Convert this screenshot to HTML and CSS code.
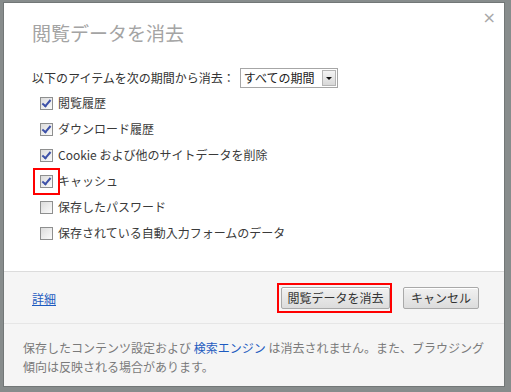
FILE: index.html
```html
<!DOCTYPE html>
<html lang="ja">

<head>
    <meta charset="UTF-8">
    <title>閲覧データを消去</title>
    <link rel="stylesheet" href="styles.css">
</head>

<body>
    <div class="dialog">
        <span class="close">×</span>
        <div class="dialog-main">
            <h1 class="title">閲覧データを消去</h1>
            <div class="period-row">
                <span>以下のアイテムを次の期間から消去：</span>
                <span class="select">
                    <span class="select-text">すべての期間</span>
                    <span class="select-arrow"></span>
                </span>
            </div>
            <ul class="checks">
                <li><span class="box checked"></span>閲覧履歴</li>
                <li><span class="box checked"></span>ダウンロード履歴</li>
                <li><span class="box checked"></span>Cookie および他のサイトデータを削除</li>
                <li><span class="box checked marked"></span>キャッシュ</li>
                <li><span class="box"></span>保存したパスワード</li>
                <li><span class="box"></span>保存されている自動入力フォームのデータ</li>
            </ul>
        </div>
        <div class="dialog-foot">
            <a class="link" href="#">詳細</a>
            <div class="buttons">
                <span class="marked-btn"><button class="btn btn-wide">閲覧データを消去</button></span>
                <button class="btn">キャンセル</button>
            </div>
        </div>
        <div class="dialog-note">
            <p>保存したコンテンツ設定および <a href="#">検索エンジン</a> は消去されません。また、ブラウジング</p>
            <p>傾向は反映される場合があります。</p>
        </div>
    </div>
</body>

</html>
```

FILE: styles.css
```css
/* Clear browsing data dialog over a dimmed page */

html,
body {
    margin: 0;
    padding: 0;
}

body {
    background-color: #878c8c;
    padding: 3px 0 0 4px;
    height: 392px;
    box-sizing: border-box;
    overflow: hidden;
    font-family: "Noto Sans CJK JP", sans-serif;
    font-size: 12px;
    color: #333;
}

.dialog {
    position: relative;
    width: 500px;
    height: 383px;
    background-color: #fff;
    display: flex;
    flex-direction: column;
    box-shadow: 0 0 0 1px rgba(0, 0, 0, 0.15);
}

.close {
    position: absolute;
    top: 6px;
    right: 8px;
    color: #a8a8a8;
    font-size: 16px;
    line-height: 18px;
    font-family: "DejaVu Sans", sans-serif;
}

.dialog-main {
    padding: 18px 28px 25px 28px;
}

.title {
    margin: 0;
    font-size: 19px;
    line-height: 24px;
    font-weight: normal;
    color: #a4a4a4;
}

.period-row {
    display: flex;
    align-items: center;
    margin-top: 23px;
    height: 20px;
    line-height: 20px;
}

.select {
    display: flex;
    align-items: center;
    width: 98px;
    height: 20px;
    box-sizing: border-box;
    border: 1px solid #a6a6a6;
    margin-left: 5px;
}

.select-text {
    flex: 1;
    padding-left: 3px;
    color: #222;
}

.select-arrow {
    width: 14px;
    height: 16px;
    margin-right: 1px;
    border: 1px solid #b5b5b5;
    box-sizing: border-box;
    background: linear-gradient(#f4f4f4, #d8d8d8);
    position: relative;
}

.select-arrow::after {
    content: "";
    position: absolute;
    left: 3px;
    top: 6px;
    border-left: 3px solid transparent;
    border-right: 3px solid transparent;
    border-top: 3px solid #111;
}

.checks {
    list-style: none;
    margin: 2px 0 0 0;
    padding: 0 0 0 8px;
}

.checks li {
    display: flex;
    align-items: center;
    height: 26px;
    line-height: 26px;
    color: #3a3a3a;
}

.box {
    width: 13px;
    height: 13px;
    box-sizing: border-box;
    border: 1px solid #8e8f8f;
    background: linear-gradient(135deg, #dcdcdc, #fbfbfb);
    margin-right: 5px;
    position: relative;
}

.box.checked::after {
    content: "";
    position: absolute;
    left: 3px;
    top: 0px;
    width: 3px;
    height: 7px;
    border-right: 2px solid #3d51a8;
    border-bottom: 2px solid #3d51a8;
    transform: rotate(40deg);
}

.box.marked {
    outline: 2px solid #f00;
    outline-offset: 5px;
}

.dialog-foot {
    display: flex;
    align-items: center;
    justify-content: space-between;
    height: 30px;
    padding: 11px 25px 10px 28px;
    background-color: #f5f5f5;
    border-top: 1px solid #dcdcdc;
}

.link {
    color: #1d5bc0;
    text-decoration: underline;
}

.buttons {
    display: flex;
    align-items: center;
}

.marked-btn {
    display: flex;
    border: 2px solid #f00;
    padding: 2px 0 2px 2px;
    margin-right: 11px;
}

.btn {
    height: 22px;
    padding: 0 7px;
    font-family: inherit;
    font-size: 12px;
    line-height: 20px;
    white-space: nowrap;
    color: #333;
    border: 1px solid #a9a9a9;
    border-radius: 2px;
    background: linear-gradient(#f1f1f1, #dcdcdc);
    box-shadow: inset 0 1px 0 #fff;
}

.btn-wide {
    width: 109px;
    padding: 0;
}

.dialog-note {
    flex: 1;
    padding: 14px 10px 0 19px;
    background-color: #f5f5f5;
    border-top: 1px solid #e6e6e6;
    line-height: 19px;
    color: #7a7a7a;
}

.dialog-note p {
    margin: 0;
    white-space: nowrap;
}

.dialog-note a {
    color: #1d5bc0;
    text-decoration: none;
}
```
